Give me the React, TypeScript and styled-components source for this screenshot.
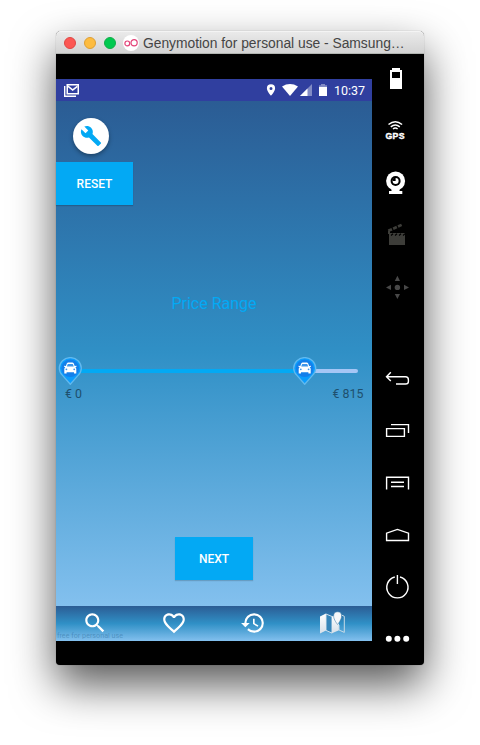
import React from "react";
import styled, { createGlobalStyle } from "styled-components";

const GlobalStyle = createGlobalStyle`
  html, body { margin: 0; background: #fff; }
  svg { display: block; }
`;

const Desktop = styled.main`
  box-sizing: border-box;
  width: 480px;
  height: 745px;
  padding: 31px 56px 0;
  overflow: hidden;
  background: #fff;
`;

const Window = styled.section`
  width: 368px;
  height: 634px;
  display: flex;
  flex-direction: column;
  border-radius: 5px 5px 4px 4px;
  background: #000;
  box-shadow: 0 0 1px rgba(0, 0, 0, 0.45), 0 20px 44px rgba(0, 0, 0, 0.66);
`;

const TitleBar = styled.header`
  box-sizing: border-box;
  height: 23px;
  flex: none;
  display: flex;
  align-items: center;
  padding: 1px 0 0 8px;
  border-radius: 5px 5px 0 0;
  border-bottom: 1px solid #b1b4b1;
  background: linear-gradient(#ebebeb, #d3d3d3);
  box-shadow: inset 0 1px #f4f4f4;
`;

const Light = styled.span<{ $color: string; $edge: string }>`
  box-sizing: border-box;
  width: 12px;
  height: 12px;
  margin-right: 8px;
  border-radius: 50%;
  background: ${(p) => p.$color};
  border: 1px solid ${(p) => p.$edge};
`;

const AppLogo = styled.svg`
  width: 16px;
  height: 16px;
  margin-left: -1px;
`;

const Title = styled.h1`
  margin: 0 0 0 4px;
  font: 400 13.85px/22px "Liberation Sans", Arial, sans-serif;
  letter-spacing: -0.02px;
  color: #454545;
  white-space: nowrap;
`;

const Body = styled.div`
  flex: 1;
  display: flex;
`;

const Phone = styled.div`
  width: 316px;
  padding-top: 25px;
  font-family: Roboto, sans-serif;
`;

const StatusBar = styled.div`
  height: 22px;
  display: flex;
  align-items: center;
  background: #303f9f;
`;

const StatusTime = styled.time`
  margin-left: 6px;
  padding-top: 2px;
  font-size: 12.5px;
  font-weight: 400;
  line-height: 20px;
  color: #fff;
`;

const Screen = styled.div`
  box-sizing: border-box;
  height: 505px;
  display: flex;
  flex-direction: column;
  padding-top: 17px;
  background: linear-gradient(#2b5c94, #3090c6 50%, #83c0ee);
`;

const ToolButton = styled.button`
  width: 36px;
  height: 36px;
  margin: 0 0 8px 17px;
  padding: 0;
  border: 0;
  border-radius: 50%;
  display: grid;
  place-items: center;
  background: #fff;
  box-shadow: 0 2px 4px rgba(0, 0, 0, 0.35);
`;

const ActionButton = styled.button<{ $width: number }>`
  width: ${(p) => p.$width}px;
  height: 43px;
  flex: none;
  padding: 1px 0 0;
  border: 0;
  background: #03a9f4;
  box-shadow: 0 1px 1px rgba(0, 0, 0, 0.16);
  color: #fff;
  font: 500 12px/43px Roboto, sans-serif;
`;

const Heading = styled.h2`
  margin: 88px 0 0;
  font-size: 16px;
  font-weight: 400;
  line-height: 22px;
  text-align: center;
  color: #03a9f4;
`;

const Slider = styled.div`
  height: 28px;
  margin: 42px 0 0 2px;
  display: flex;
`;

const Labels = styled.div`
  height: 18px;
  display: flex;
  justify-content: space-between;
  padding: 0 8.5px 0 9px;
  font-size: 12.4px;
  line-height: 18px;
  color: #1f506e;
`;

const NextArea = styled.div`
  display: flex;
  justify-content: center;
  margin-top: 134px;
`;

const Nav = styled.nav`
  position: relative;
  height: 35px;
  display: grid;
  grid-template-columns: repeat(4, 79px);
  place-items: center;
  background: linear-gradient(#2b5c94, #3090c6 50%, #83c0ee);

  > svg {
    margin: -1px 1px 0 0;
  }
`;

const Watermark = styled.small`
  position: absolute;
  left: 1px;
  bottom: 0;
  font-size: 7.2px;
  line-height: 10px;
  color: rgba(38, 98, 145, 0.42);
`;

const Sidebar = styled.aside`
  width: 52px;
  display: flex;
  flex-direction: column;
  margin-top: -1px;
`;

const Slot = styled.div<{ $gap?: number }>`
  height: 52px;
  flex: none;
  margin-top: ${(p) => p.$gap ?? 0}px;
`;

const SideIcon = ({ gap, children }: { gap?: number; children: React.ReactNode }) => (
  <Slot $gap={gap}>
    <svg width="52" height="52" fill="none" stroke="#fff" strokeWidth="1.4">
      {children}
    </svg>
  </Slot>
);

const Pin = ({ x }: { x: number }) => (
  <g transform={`translate(${x} 0)`}>
    <path
      d="M0 27.3 L-7.8 18.4 C-10 16.2 -11 13.8 -11 11.2 A11 10.6 0 0 1 11 11.2 C11 13.8 10 16.2 7.8 18.4 Z"
      fill="#0b9cfc"
      stroke="#62b9ee"
      strokeWidth="1.3"
    />
    <circle cy="11.2" r="8.8" fill="#147fea" />
    <path
      d="M-6 16.5v-4.6q0-1.2 1-1.7l-1.2-.4v-1l1.8.1.9-2.3q.5-1 1.5-1h4q1 0 1.5 1l.9 2.3 1.8-.1v1l-1.2.4q1 .5 1 1.7v4.6H3.7v-1.2h-7.4v1.2Z"
      fill="#fff"
    />
    <path d="M-3.5 9.5l1-2.5h5l1 2.5Z" fill="#3f96ea" />
    <circle cx="-3.9" cy="12.3" r=".9" fill="#3f96ea" />
    <circle cx="3.9" cy="12.3" r=".9" fill="#3f96ea" />
  </g>
);

const StatusIcons = () => (
  <svg width="272" height="22" fill="#fff">
    <path d="M8 7h1.4v9.6H20V18H8Z" />
    <path fillRule="evenodd" d="M10.5 5H23v10.5H10.5ZM12 6.4v7.7h9.5V6.4Z" />
    <path d="M12 6.2l4.7 3.7 4.8-3.7V8.3L16.7 12 12 8.3Z" />
    <path
      fillRule="evenodd"
      d="M215 5.2a4.1 4.1 0 0 0-4.1 4.1c0 3 4.1 7.5 4.1 7.5s4.1-4.5 4.1-7.5a4.1 4.1 0 0 0-4.1-4.1Zm0 2.7a1.5 1.5 0 1 1 0 3 1.5 1.5 0 0 1 0-3Z"
    />
    <path d="M226 7.5q8-4.8 16 0L234 17Z" />
    <path d="M256 5v12h-12Z" fill="#828bc5" />
    <path d="M251.5 9.5V17H244Z" />
    <path d="M265 5h4v1.3h2V9h-8V6.3h2Z" fill="#828bc5" />
    <path d="M263 8h8v9h-8Z" />
  </svg>
);

const MapIcon = () => (
  <svg width="27" height="24" viewBox="0 0 27 24">
    <defs>
      <linearGradient id="paper" x2="0" y2="1">
        <stop stopColor="#fff" />
        <stop offset="1" stopColor="#d6e0e9" />
      </linearGradient>
    </defs>
    <path d="M1 5.5 7 2.5v17L1 22.5Z" fill="url(#paper)" />
    <path d="M7 3l6 2.5v16.6L7 19.4Z" fill="#3585b9" stroke="#dce8f0" strokeWidth=".9" />
    <path d="M13 5.5l3-1.5 2.4 7 1.6 2v6.2l-7 3Z" fill="url(#paper)" />
    <path d="M20 14v5l5.3 2.4V5.3L22.5 4" fill="none" stroke="#c7dbe7" strokeWidth="1" />
    <path
      d="M18.6 13.5S14.6 8.7 14.6 5a4 4.2 0 0 1 8 0c0 3.7-4 8.5-4 8.5Z"
      fill="#f7f8f9"
      stroke="#286c9e"
      strokeWidth=".5"
    />
  </svg>
);

const navPaths = [
  "M15.5 14h-.79l-.28-.27C15.41 12.59 16 11.11 16 9.5 16 5.91 13.09 3 9.5 3S3 5.91 3 9.5 5.91 16 9.5 16c1.61 0 3.09-.59 4.23-1.57l.27.28v.79l5 4.99L20.49 19l-4.99-5zm-6 0C7.01 14 5 11.99 5 9.5S7.01 5 9.5 5 14 7.01 14 9.5 11.99 14 9.5 14z",
  "M16.5 3c-1.74 0-3.41.81-4.5 2.09C10.91 3.81 9.24 3 7.5 3 4.42 3 2 5.42 2 8.5c0 3.78 3.4 6.86 8.55 11.54L12 21.35l1.45-1.32C18.6 15.36 22 12.28 22 8.5 22 5.42 19.58 3 16.5 3zm-4.4 15.55l-.1.1-.1-.1C7.14 14.24 4 11.39 4 8.5 4 6.5 5.5 5 7.5 5c1.54 0 3.04.99 3.57 2.36h1.87C13.46 5.99 14.96 5 16.5 5c2 0 3.5 1.5 3.5 3.5 0 2.89-3.14 5.74-7.9 10.05z",
  "M13 3a9 9 0 0 0-9 9H1l3.89 3.89.07.14L9 12H6c0-3.87 3.13-7 7-7s7 3.13 7 7-3.13 7-7 7c-1.93 0-3.68-.79-4.94-2.06l-1.42 1.42A8.954 8.954 0 0 0 13 21a9 9 0 0 0 0-18zm-1 5v5l4.28 2.54.72-1.21-3.5-2.08V8H12z",
];

export default function App() {
  return (
    <Desktop>
      <GlobalStyle />
      <Window>
        <TitleBar>
          <Light $color="#fc5753" $edge="#df4744" />
          <Light $color="#fdbc40" $edge="#de9f34" />
          <Light $color="#00c94f" $edge="#12ac49" />
          <AppLogo viewBox="0 0 16 16">
            <circle cx="8" cy="8" r="8" fill="#fff" />
            <g fill="none" stroke="#e34378" strokeWidth="1.2">
              <circle cx="4.3" cy="8.4" r="2.4" />
              <circle cx="11.1" cy="7.7" r="3.1" />
            </g>
          </AppLogo>
          <Title>Genymotion for personal use - Samsung…</Title>
        </TitleBar>
        <Body>
          <Phone>
            <StatusBar>
              <StatusIcons />
              <StatusTime>10:37</StatusTime>
            </StatusBar>
            <Screen>
              <ToolButton aria-label="Settings">
                <svg width="22" height="22" viewBox="0 0 24 24" fill="#03a9f4">
                  <path d="M22.7 19l-9.1-9.1c.9-2.3.4-5-1.5-6.9-2-2-5-2.4-7.4-1.3L9 6 6 9 1.6 4.7C.4 7.1.9 10.1 2.9 12.1c1.9 1.9 4.6 2.4 6.9 1.5l9.1 9.1c.4.4 1 .4 1.4 0l2.3-2.3c.5-.4.5-1.1.1-1.4z" />
                </svg>
              </ToolButton>
              <ActionButton $width={77}>RESET</ActionButton>
              <Heading>Price Range</Heading>
              <Slider>
                <svg width="314" height="28">
                  <path d="M246 14h52" stroke="#a5c6f5" strokeWidth="4" strokeLinecap="round" />
                  <path d="M12 14h235" stroke="#03a9f4" strokeWidth="4" />
                  <Pin x={12.3} />
                  <Pin x={246.7} />
                </svg>
              </Slider>
              <Labels>
                <span>€ 0</span>
                <span>€ 815</span>
              </Labels>
              <NextArea>
                <ActionButton $width={78}>NEXT</ActionButton>
              </NextArea>
            </Screen>
            <Nav>
              <Watermark>free for personal use</Watermark>
              {navPaths.map((d) => (
                <svg key={d} width="26" height="26" viewBox="0 0 24 24" fill="#fff">
                  <path d={d} />
                </svg>
              ))}
              <MapIcon />
            </Nav>
          </Phone>
          <Sidebar>
            <SideIcon>
              <path
                d="M20 15h8v2h2v19H18V17h2Zm0 4v6h8v-6Z"
                fill="#fff"
                fillRule="evenodd"
                stroke="none"
              />
            </SideIcon>
            <SideIcon>
              <path d="M16.5 19.5q6.8-5.6 13.6 0M18.8 21.9q4.5-3.6 9 0M21 24q2.3-1.8 4.6 0" strokeWidth="1.5" />
              <text
                x="13.5"
                y="33.6"
                fill="#fff"
                strokeWidth=".4"
                fontFamily="Liberation Sans, sans-serif"
                fontWeight="700"
                fontSize="8.7"
                textLength="19"
              >
                GPS
              </text>
            </SideIcon>
            <SideIcon>
              <g stroke="none">
                <path d="M19.5 31h8v4h-8Z" fill="#fff" />
                <path d="M17 34h13.3v3H17Z" fill="#fff" />
                <circle cx="23.6" cy="24" r="9.5" fill="#fff" />
                <circle cx="23.6" cy="24" r="5" fill="#000" />
                <circle cx="23.6" cy="24" r="3" fill="#fff" />
                <path d="M23.6 24v-3.2a3 3 0 0 0-3 3.2Z" fill="#000" />
              </g>
            </SideIcon>
            <SideIcon>
              <path d="M17 24h16v12H17Z" fill="#3d3d39" stroke="none" />
              <path d="M16.3 21.8 30.7 15.4" stroke="#3d3d39" strokeWidth="2.7" strokeDasharray="4 1.3" />
              <path d="M17 22v3" stroke="#3d3d39" strokeWidth="2" />
              <path d="M19 26.5l2-1.8m2 1.8 2-1.8m2 1.8 2-1.8m2 1.8 2-1.8" stroke="#000" strokeWidth="1.2" />
            </SideIcon>
            <SideIcon>
              <g fill="#484848" stroke="none">
                <circle cx="25.4" cy="26.4" r="2.7" />
                <path d="M25.4 14.7 28 20h-5.2ZM25.4 38 28 33h-5.2ZM14 26.4 19 23.8V29ZM37 26.4 32 23.8V29Z" />
              </g>
            </SideIcon>
            <SideIcon gap={39}>
              <path d="M18.8 20.3 14.5 24.8 18.8 29M14.5 24.8H33.5Q36.4 24.8 36.4 27.7V29.4Q36.4 32 33.5 32H24" />
            </SideIcon>
            <SideIcon>
              <path d="M19 20.6h17.5V29" />
              <path d="M14.6 24.6h17.8v7.8H14.6Z" />
            </SideIcon>
            <SideIcon>
              <path d="M14.6 33.5V21.2h21.9v12.3M19 26.3h13M19 30.5h13" />
            </SideIcon>
            <SideIcon>
              <path d="M14.6 32.5V25.2l10.8-3.8 11.1 3.8v7.3Z" />
            </SideIcon>
            <SideIcon>
              <path d="M22.8 17a10.6 10.6 0 1 0 5.2 0M25.4 15v9" />
            </SideIcon>
            <SideIcon>
              <g fill="#fff" stroke="none">
                <circle cx="16.8" cy="26.7" r="3" />
                <circle cx="25.4" cy="26.7" r="3" />
                <circle cx="34.2" cy="26.7" r="3" />
              </g>
            </SideIcon>
          </Sidebar>
        </Body>
      </Window>
    </Desktop>
  );
}
